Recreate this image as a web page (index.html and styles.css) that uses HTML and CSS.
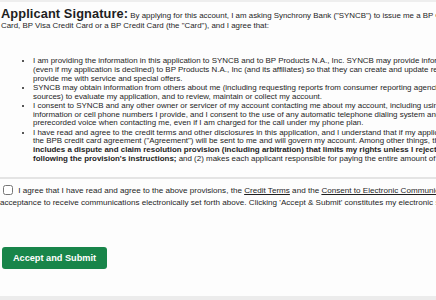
FILE: index.html
```html
<!DOCTYPE html>
<html lang="en">
<head>
    <meta charset="UTF-8">
    <meta name="viewport" content="width=device-width, initial-scale=1.0">
    <title>Applicant Signature</title>
    <link rel="stylesheet" href="styles.css">
</head>
<body>
    <div class="page">
        <div class="top-rule"></div>

        <section class="signature">
            <p class="intro">
                <strong>Applicant Signature:</strong> By applying for this account, I am asking Synchrony Bank ("SYNCB") to issue me a BP Credit<br>
                Card, BP Visa Credit Card or a BP Credit Card (the "Card"), and I agree that:
            </p>

            <ul class="terms">
                <li>I am providing the information in this application to SYNCB and to BP Products N.A., Inc. SYNCB may provide information<br>
                    (even if my application is declined) to BP Products N.A., Inc (and its affiliates) so that they can create and update records to<br>
                    provide me with service and special offers.</li>
                <li>SYNCB may obtain information from others about me (including requesting reports from consumer reporting agencies and other<br>
                    sources) to evaluate my application, and to review, maintain or collect my account.</li>
                <li>I consent to SYNCB and any other owner or servicer of my account contacting me about my account, including using any<br>
                    information or cell phone numbers I provide, and I consent to the use of any automatic telephone dialing system and/or an<br>
                    prerecorded voice when contacting me, even if I am charged for the call under my phone plan.</li>
                <li>I have read and agree to the credit terms and other disclosures in this application, and I understand that if my application is approved,<br>
                    the BPB credit card agreement ("Agreement") will be sent to me and will govern my account. Among other things, the Agreement: (1)<br>
                    <b>includes a dispute and claim resolution provision (including arbitration) that limits my rights unless I reject the provision by<br>
                    following the provision's instructions;</b> and (2) makes each applicant responsible for paying the entire amount of the credit extended.</li>
            </ul>
        </section>

        <section class="consent">
            <label class="agree">
                <input type="checkbox" class="check"> I agree that I have read and agree to the above provisions, the <a href="#">Credit Terms</a> and the <a href="#">Consent to Electronic Communications</a>, and my<br>
                acceptance to receive communications electronically set forth above. Clicking 'Accept &amp; Submit' constitutes my electronic signature.
            </label>

            <button class="btn-submit" type="button">Accept and Submit</button>
        </section>

        <div class="bottom-rule"></div>
    </div>
</body>
</html>
```

FILE: styles.css
```css
body {
    margin: 0;
    padding: 0;
    background-color: #fdfdfd;
    color: #1e1e1e;
    font-family: 'Liberation Sans', Arial, sans-serif;
    overflow: hidden;
}
.page {
    width: 436px;
    height: 300px;
    overflow: hidden;
    display: flex;
    flex-direction: column;
}
.top-rule {
    height: 2px;
    background-color: #eeeeee;
}
.signature {
    white-space: nowrap;
    font-size: 7.9px;
    line-height: 8.8px;
}
.intro {
    margin: 7px 0 0 1px;
    line-height: 10px;
}
.intro strong {
    font-size: 12.8px;
    letter-spacing: 0.1px;
}
.terms {
    margin: 26px 0 0 0;
    padding-left: 33px;
    font-size: 7.95px;
}
.terms li {
    margin-bottom: 0.4px;
}
.consent {
    margin-top: 13px;
    border-top: 2px solid #e4e4e4;
    white-space: nowrap;
    font-size: 8.1px;
    line-height: 12px;
}
.agree {
    display: block;
    padding-top: 6px;
}
.check {
    width: 10px;
    height: 10px;
    margin: 0 3px 0 3px;
    vertical-align: -2px;
}
.agree a {
    color: #1e1e1e;
}
.btn-submit {
    display: block;
    margin: 38px 0 0 2px;
    width: 105px;
    height: 22px;
    border: none;
    border-radius: 3px;
    background-color: #18854a;
    color: #fff;
    font-family: inherit;
    font-size: 9.2px;
    font-weight: bold;
}
.bottom-rule {
    margin-top: auto;
    height: 4px;
    background-color: #ececec;
}
```
